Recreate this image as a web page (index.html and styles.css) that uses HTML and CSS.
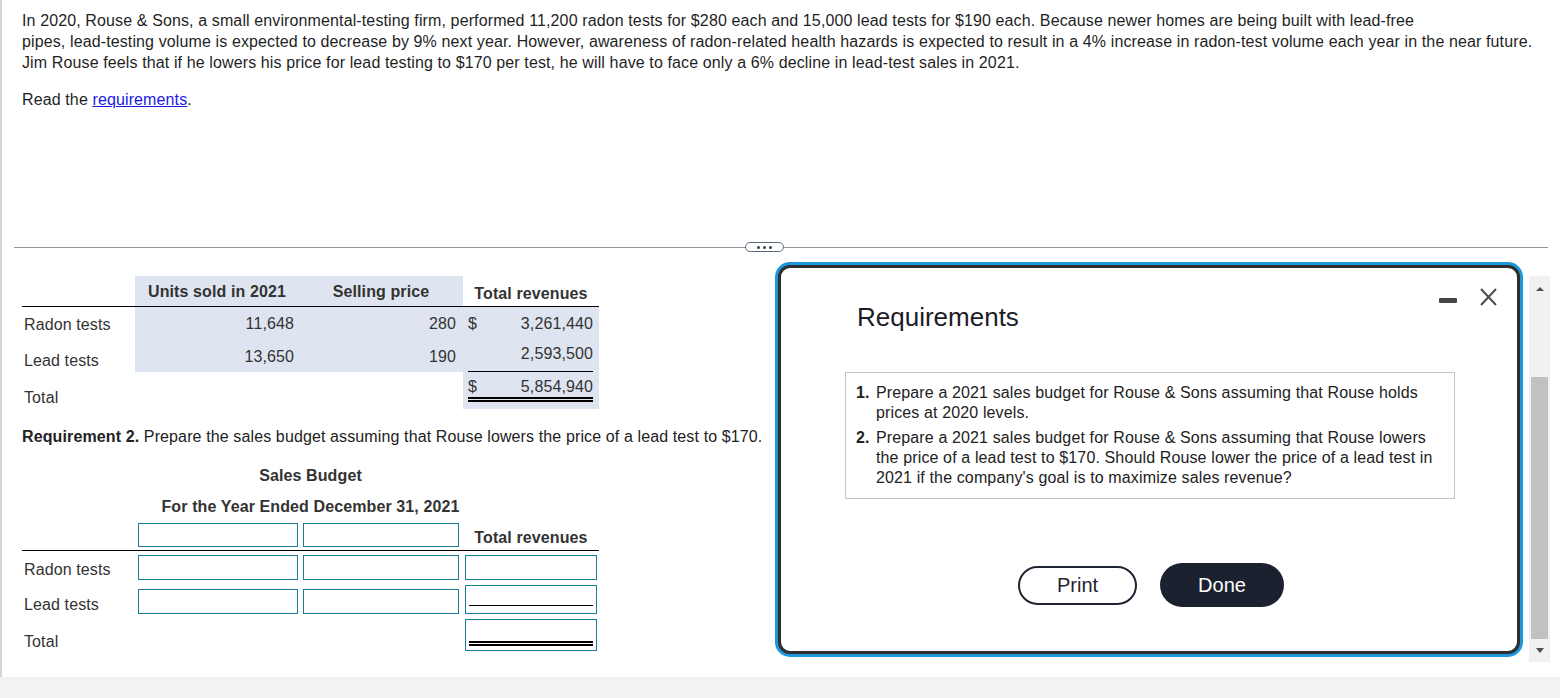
FILE: index.html
```html
<!DOCTYPE html>
<html lang="en">
<head>
<meta charset="utf-8">
<title>Sales Budget</title>
<link rel="stylesheet" href="styles.css">
</head>
<body>
<div class="panel">
  <div class="question">
    <p class="intro">In 2020, Rouse &amp; Sons, a small environmental-testing firm, performed 11,200 radon tests for $280 each and 15,000 lead tests for $190 each. Because newer homes are being built with lead-free<br>pipes, lead-testing volume is expected to decrease by 9% next year. However, awareness of radon-related health hazards is expected to result in a 4% increase in radon-test volume each year in the near future.<br>Jim Rouse feels that if he lowers his price for lead testing to $170 per test, he will have to face only a 6% decline in lead-test sales in 2021.</p>
    <p class="read">Read the <a href="#" class="link">requirements</a>.</p>
  </div>

  <div class="divider"><span class="more"><i></i><i></i><i></i></span></div>

  <div class="work">
    <div class="grid t1">
      <div class="c h"></div>
      <div class="c h shade ctr">Units sold in 2021</div>
      <div class="c h shade ctr">Selling price</div>
      <div class="c h hb">Total revenues</div>

      <div class="c lab">Radon tests</div>
      <div class="c shade num p5">11,648</div>
      <div class="c shade num p7">280</div>
      <div class="c shade tot mid"><div class="amt"><span>$</span><span>3,261,440</span></div></div>

      <div class="c lab lab2">Lead tests</div>
      <div class="c shade num p5">13,650</div>
      <div class="c shade num p7">190</div>
      <div class="c shade tot end"><div class="amt ul1"><span></span><span>2,593,500</span></div></div>

      <div class="c lab lab3">Total</div>
      <div class="c"></div>
      <div class="c"></div>
      <div class="c shade tot start"><div class="amt ul2"><span>$</span><span>5,854,940</span></div></div>
    </div>

    <p class="req2"><b>Requirement 2.</b> Prepare the sales budget assuming that Rouse lowers the price of a lead test to $170.</p>

    <div class="bt-title first">Sales Budget</div>
    <div class="bt-title">For the Year Ended December 31, 2021</div>

    <div class="grid t2">
      <div class="c h2"></div>
      <div class="c h2 pt1"><input class="inp w1 h24" type="text" aria-label="Column 1 heading"></div>
      <div class="c h2 pt1"><input class="inp w2 h24" type="text" aria-label="Column 2 heading"></div>
      <div class="c h2 hb">Total revenues</div>

      <div class="c lab pt10">Radon tests</div>
      <div class="c pt4"><input class="inp w1 h25" type="text" aria-label="Radon tests column 1"></div>
      <div class="c pt4"><input class="inp w2 h25" type="text" aria-label="Radon tests column 2"></div>
      <div class="c pt4"><input class="inp w3 h25" type="text" aria-label="Radon tests total revenues"></div>

      <div class="c lab pt12">Lead tests</div>
      <div class="c pt5"><input class="inp w1 h25" type="text" aria-label="Lead tests column 1"></div>
      <div class="c pt5"><input class="inp w2 h25" type="text" aria-label="Lead tests column 2"></div>
      <div class="c pt1"><div class="box w3 bh29"><div class="line1"></div></div></div>

      <div class="c lab pt17">Total</div>
      <div class="c"></div>
      <div class="c"></div>
      <div class="c pt3"><div class="box w3 bh32"><div class="line2"></div></div></div>
    </div>
  </div>

  <div class="scrollbar">
    <span class="sb-up"></span>
    <span class="sb-thumb"></span>
    <span class="sb-down"></span>
  </div>

  <div class="modal" role="dialog" aria-label="Requirements">
    <div class="m-head">
      <h2 class="m-title">Requirements</h2>
      <div class="m-tools">
        <span class="minimize"></span>
        <svg class="close" viewBox="0 0 17 18" width="17" height="18" aria-hidden="true">
          <path d="M1 1 L16 17 M16 1 L1 17" stroke="#474d55" stroke-width="2" fill="none"/>
        </svg>
      </div>
    </div>
    <div class="req-box">
      <ol class="req-list">
        <li><span class="n">1.</span><span>Prepare a 2021 sales budget for Rouse &amp; Sons assuming that Rouse holds prices at 2020 levels.</span></li>
        <li><span class="n">2.</span><span>Prepare a 2021 sales budget for Rouse &amp; Sons assuming that Rouse lowers the price of a lead test to $170. Should Rouse lower the price of a lead test in 2021 if the company's goal is to maximize sales revenue?</span></li>
      </ol>
    </div>
    <div class="m-actions">
      <button class="btn print" type="button">Print</button>
      <button class="btn done" type="button">Done</button>
    </div>
  </div>
</div>
</body>
</html>
```
FILE: styles.css
```css
* { box-sizing: border-box; }
html, body { margin: 0; padding: 0; }
body {
  width: 1560px;
  height: 698px;
  overflow: hidden;
  background: #f2f2f2;
  font-family: "Liberation Sans", Arial, sans-serif;
  letter-spacing: 0.11px;
  color: #222;
}
.panel {
  position: relative;
  height: 677px;
  background: #fff;
  border-left: 2px solid #d3d3d3;
}
.question {
  padding: 10px 0 0 20px;
  font-size: 16px;
  line-height: 21px;
  letter-spacing: 0.12px;
  color: #1f1f1f;
}
.question p { margin: 0; white-space: nowrap; }
.question .read { margin-top: 16px; }
.link { color: #1a1ae6; text-decoration: underline; }

.divider {
  position: relative;
  height: 1px;
  margin: 137px 12px 0 12px;
  background: #8d949c;
}
.more {
  position: absolute;
  left: 731px;
  top: -5px;
  width: 39px;
  height: 10px;
  border: 1px solid #5b6b7c;
  border-radius: 6px;
  background: #fff;
  display: flex;
  align-items: center;
  justify-content: center;
  gap: 3px;
}
.more i { display: block; width: 3px; height: 3px; border-radius: 50%; background: #3a3f46; }

.work {
  padding: 28px 0 0 20px;
  font-size: 16px;
  line-height: 18px;
  color: #333;
}
.grid {
  display: grid;
  grid-template-columns: 113px 164px 164px 136px;
  width: 577px;
}
.t1 { grid-template-rows: 31px 34px 31px 37px; }
.t2 { grid-template-rows: 29px 33px 32px 37px; }
.c { display: flex; }
.shade { background: #dee5f0; }
.h { border-bottom: 1px solid #000; font-weight: bold; align-items: center; }
.h2 { border-bottom: 1px solid #000; }
.ctr { justify-content: center; padding-top: 2px; }
.hb { font-weight: bold; justify-content: center; align-items: flex-end; padding-bottom: 3px; }
.lab { align-items: center; padding-left: 2px; padding-top: 2px; }
.lab2 { padding-top: 9px; }
.lab3 { align-items: flex-start; padding-top: 17px; }
.num { align-items: center; justify-content: flex-end; }
.p5 { padding-right: 5px; }
.p7 { padding-right: 7px; }
.tot { padding: 0 6px 0 5px; }
.tot.mid { align-items: center; }
.tot.end { align-items: flex-end; }
.tot.start { align-items: flex-start; }
.amt { display: flex; justify-content: space-between; width: 100%; }
.ul1 { padding-bottom: 8px; border-bottom: 1px solid #000; }
.ul2 { margin-top: 6px; padding-bottom: 1px; border-bottom: 5px double #000; }

.req2 {
  margin: 17px 0 0 0;
  line-height: 21px;
  letter-spacing: 0.12px;
  color: #222;
}
.bt-title {
  width: 577px;
  text-align: center;
  font-weight: bold;
  line-height: 31px;
}
.bt-title.first { margin-top: 13px; }

.t2 .c { align-items: flex-start; }
.t2 .h2.hb { align-items: flex-end; }
.pt1 { padding-top: 1px; }
.pt3 { padding-top: 3px; }
.pt4 { padding-top: 4px; }
.pt5 { padding-top: 5px; }
.t2 .pt10 { padding-top: 10px; }
.t2 .pt12 { padding-top: 12px; }
.t2 .pt17 { padding-top: 17px; }

.inp {
  display: block;
  margin: 0;
  padding: 0;
  border: 1px solid #1a7c96;
  border-radius: 0;
  background: #fff;
  font: inherit;
  outline: none;
}
.w1 { width: 160px; margin-left: 3px; }
.w2 { width: 156px; margin-left: 4px; }
.w3 { width: 132px; margin-left: 2px; }
.h24 { height: 24px; }
.h25 { height: 25px; }
.box { border: 1px solid #1a7c96; padding: 0 3px; background: #fff; }
.bh29 { height: 29px; }
.bh32 { height: 32px; }
.line1 { height: 20px; border-bottom: 1px solid #000; }
.line2 { height: 26px; border-bottom: 5px double #000; }

.scrollbar {
  position: absolute;
  left: 1527px;
  top: 276px;
  width: 21px;
  height: 386px;
  background: #f1f1f1;
  display: flex;
  flex-direction: column;
  align-items: center;
}
.sb-up {
  margin-top: 11px;
  width: 0; height: 0;
  border-left: 4.5px solid transparent;
  border-right: 4.5px solid transparent;
  border-bottom: 4px solid #505050;
}
.sb-thumb {
  margin-top: 86px;
  width: 17px;
  height: 262px;
  background: #c1c1c1;
}
.sb-down {
  margin-top: 9px;
  width: 0; height: 0;
  border-left: 4.5px solid transparent;
  border-right: 4.5px solid transparent;
  border-top: 5px solid #505050;
}

.modal {
  position: absolute;
  left: 776px;
  top: 265px;
  width: 742px;
  height: 389px;
  border: 3px solid #2e2e2e;
  border-radius: 12px;
  box-shadow: 0 0 0 3px #1d97dc;
  background: #fff;
}
.m-head { display: flex; justify-content: space-between; align-items: flex-start; }
.m-title {
  margin: 34px 0 0 76px;
  font-size: 26px;
  line-height: 30px;
  font-weight: normal;
  letter-spacing: 0;
  color: #1c1c28;
}
.m-tools { display: flex; align-items: flex-start; gap: 23px; margin: 20px 20px 0 0; }
.minimize { display: block; width: 18px; height: 5px; margin-top: 10px; background: #464646; border-radius: 1px; }
.close { display: block; }
.req-box {
  margin: 40px 0 0 64px;
  width: 610px;
  border: 1px solid #c3c3c3;
  padding: 10px;
}
.req-list {
  list-style: none;
  margin: 0;
  padding: 0;
  font-size: 16px;
  line-height: 20px;
  letter-spacing: 0.13px;
  color: #222;
}
.req-list li { display: flex; }
.req-list li + li { margin-top: 5px; }
.req-list .n { flex: 0 0 20px; font-weight: bold; }
.m-actions {
  display: flex;
  justify-content: center;
  align-items: center;
  gap: 23px;
  margin-top: 64px;
  padding-left: 4px;
}
.btn {
  font-family: "Liberation Sans", Arial, sans-serif;
  font-size: 20px;
  line-height: 1;
  letter-spacing: 0;
  padding: 0;
  cursor: pointer;
}
.print {
  width: 119px;
  height: 39px;
  border: 2px solid #1f2533;
  border-radius: 20px;
  background: #fff;
  color: #1d2433;
}
.done {
  width: 124px;
  height: 44px;
  border: none;
  border-radius: 22px;
  background: #1c2130;
  color: #fff;
}
```
